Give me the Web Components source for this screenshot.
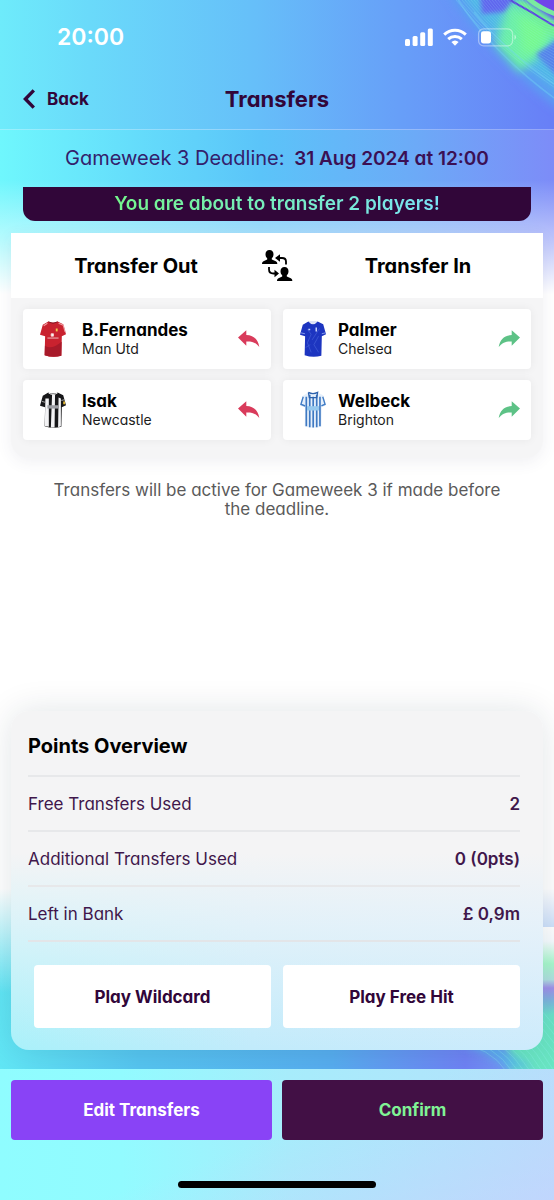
<!DOCTYPE html>
<html lang="en">
<head>
<meta charset="utf-8">
<meta name="viewport" content="width=device-width, initial-scale=1">
<title>Transfers</title>
<style>
  html { height: 100%; }
  body {
    margin: 0;
    min-height: 100%;
    display: flex;
    font-family: Inter, "Open Sans", sans-serif;
    font-feature-settings: "cv11";
    color: #000;
    background: #fff;
  }
  transfers-page { flex: 1; }
</style>
</head>
<body>
<transfers-page></transfers-page>

<script>
const define = (name, html, setup) => {
  const template = document.createElement('template');
  template.innerHTML = html;
  customElements.define(name, class extends HTMLElement {
    constructor() {
      super();
      this.attachShadow({ mode: 'open' }).append(template.content.cloneNode(true));
    }
    connectedCallback() { if (setup) setup(this, this.shadowRoot); }
  });
};

define('status-bar', `
<style>
  :host { display: flex; align-items: center; justify-content: space-between; height: 74px; padding: 0 38px 0 57px; color: #fff; }
  time { font-size: 23px; line-height: 28px; font-weight: 600; }
  svg { display: block; }
</style>
<time>20:00</time>
<svg width="112" height="20" viewBox="0 0 112 20" role="img" aria-label="Signal, Wi-Fi and battery">
  <g fill="#fff">
    <rect x="1" y="12" width="5" height="7" rx="1.5"/>
    <rect x="8.6" y="9" width="5" height="10" rx="1.5"/>
    <rect x="16.2" y="5.2" width="5" height="13.8" rx="1.5"/>
    <rect x="23.8" y="1.4" width="5" height="17.6" rx="1.5"/>
    <path d="M51 18.800l-3.600-3.700a5.400 5.400 0 0 1 7.200 0z"/>
  </g>
  <g fill="none" stroke="#fff" stroke-width="3">
    <path d="M44.200 12.200a10 10 0 0 1 13.600 0"/>
    <path d="M40.200 7.600a15.800 15.800 0 0 1 21.600 0"/>
  </g>
  <rect x="74.600" y="1.800" width="34" height="17" rx="5" fill="none" stroke="#fff" stroke-opacity=".4" stroke-width="1.300"/>
  <path d="M110.500 7.500v5.200a3 3 0 0 0 0-5.200z" fill="#fff" fill-opacity=".5"/>
  <rect x="77" y="4.200" width="10" height="12.200" rx="2.600" fill="#fff"/>
</svg>`);

define('nav-bar', `
<style>
  :host { display: grid; grid-template-columns: 1fr auto 1fr; align-items: center; height: 49px; padding: 0 23px 6px; color: #310639; border-bottom: 1px solid rgba(255,255,255,.3); }
  a { display: flex; align-items: center; gap: 12px; width: max-content; color: inherit; text-decoration: none; font-size: 17px; line-height: 24px; font-weight: 700; }
  h1 { margin: 0; font-size: 22px; line-height: 28px; font-weight: 700; }
</style>
<a href="#back">
  <svg width="12" height="20" viewBox="0 0 12 20" fill="none" stroke="#310639" stroke-width="3.400" aria-hidden="true"><path d="M10.800 1.400L2.400 10l8.400 8.600"/></svg>
  <span>Back</span>
</a>
<h1><slot></slot></h1>`);

define('deadline-notice', `
<style>
  :host { display: block; padding: 0 23px; text-align: center; }
  p { margin: 0; padding: 15px 0; font-size: 20px; line-height: 26px; color: #33206b; }
  strong { margin-left: 4px; font-size: 19px; font-weight: 600; color: #3b1054; }
  .banner { background: #310639; border-radius: 0 0 12px 12px; line-height: 34px; font-size: 19px; font-weight: 600; }
  .banner span { background: linear-gradient(90deg, #74f58c, #7ae3f5); -webkit-background-clip: text; background-clip: text; color: transparent; }
</style>
<p><slot name="label"></slot> <strong><slot name="date"></slot></strong></p>
<div class="banner" role="status"><span><slot></slot></span></div>`);

const body = 'M9 2.500Q14 5 19 2.500L25 5.500L28 16L23.500 18L23 38.500Q14 41 5 38L5.500 18L0 16.500L3 6Z';
const kits = {
  united: `<path d="${body}" fill="#c9222f"/><path d="M5.300 28Q12 33 23.300 24L23 38.500Q14 41 5 38Z" fill="#a81a2a"/><path d="M20 4.500l5 2 2 7M8 4.500L4 7" stroke="#ef9ca0" stroke-width="1.200" fill="none"/><path d="M9 3Q14 6 19 3" stroke="#821522" fill="none"/><path d="M8 20h12M12 15.500h2.500v2.500h-2.500z" stroke="#f5d4d3" stroke-width=".900" fill="#fff"/><path d="M18 10v3" stroke="#f0c84c" stroke-width="2"/>`,
  newcastle: `<path d="${body}" fill="#171719"/><path d="M5.800 9h3.700v29.500l-4.300-.700zM13 5h3.200l-.500 34.500h-4zM20 8l2.500 1v29l-3 1z" fill="#f3f3f5"/><path d="M2 12l4 1M23 11l4-1" stroke="#aaa"/><rect x="8" y="16" width="12" height="3.500" fill="#9c9da3"/><path d="M9 3Q14 6.500 19 3" stroke="#eee" fill="none"/><rect x="25" y="12" width="2" height="3" fill="#e1b632"/>`,
  chelsea: `<path d="${body}" fill="#1d35c0"/><path d="M9 2.500q5 6 10 0l-2-.500h-6z" fill="#dfe4f5"/><path d="M8 11l4 5-4 9 4 10M20 18l-5 9 5 8M6 30l5-3M21 10l-8 12" stroke="#4460d8" stroke-width=".700" fill="none"/><path d="M17.500 9v4M9 11h2" stroke="#c8d3fc" stroke-width="1.600"/><path d="M.800 14.500l4.500 1M23.500 15.500l4-1" stroke="#8da0ee"/>`,
  brighton: `<path d="${body}" fill="#e6f0fb"/><path d="M6.800 7v31M10.500 5v34M14.200 7v32.500M18 5v34M21.500 7v31" stroke="#3f79c2" stroke-width="1.800"/><path d="M9 2.500L10 8H18L19 2.500Q14 5 9 2.500" fill="none" stroke="#2c61ac" stroke-width="1.300"/><path d="M3.500 7L1 15l4.500 1.800M24.500 7l2.500 8-4 1.600" fill="none" stroke="#407cc5" stroke-width="1.500"/><rect x="7.500" y="17" width="13" height="4.500" fill="#96c9ee"/>`
};

define('player-card', `
<style>
  :host { display: flex; align-items: center; box-sizing: border-box; min-width: 0; height: 60px; padding: 0 10px 0 17px; background: #fff; border-radius: 4px; box-shadow: 0 0 10px rgba(0,0,0,.06); }
  svg { display: block; flex: none; }
  .text { flex: 1; min-width: 0; margin-left: 16px; }
  :host([direction="in"]) .text { margin-left: 12px; }
  .name { font-size: 17px; line-height: 20px; font-weight: 700; }
  .club { font-size: 14px; line-height: 18px; color: #1c1c1c; }
  .arrow { color: #d93b5b; }
  :host([direction="in"]) .arrow { color: #5dc286; transform: scaleX(-1); }
</style>
<svg class="kit" width="26" height="40" viewBox="0 0 28 42" preserveAspectRatio="none" aria-hidden="true"></svg>
<div class="text"><div class="name"><slot></slot></div><div class="club"><slot name="club"></slot></div></div>
<svg class="arrow" width="24" height="20" viewBox="0 0 24 20" fill="currentColor" aria-hidden="true"><path d="M1 8.600L9.300 1.200V6C17 6.300 21 10.500 22.300 18C18.500 13.200 15 12.200 9.300 12.400V16.800Z"/></svg>`,
(host, root) => { root.querySelector('.kit').innerHTML = kits[host.getAttribute('kit')]; });

define('transfer-panel', `
<style>
  :host { display: block; margin: 12px 11px 0; background: #f5f5f6; border-radius: 0 0 18px 18px; box-shadow: 0 4px 16px rgba(60,60,100,.08); }
  header { display: grid; grid-template-columns: 1fr 32px 1fr; align-items: center; height: 65px; background: #fff; text-align: center; }
  h2 { margin: 0; font-size: 20px; line-height: 26px; font-weight: 700; }
  .grid { display: grid; grid-template-columns: 1fr 1fr; gap: 11px 12px; padding: 11px 12px 18px; }
  svg { display: block; }
</style>
<header>
  <h2><slot name="out"></slot></h2>
  <svg width="32" height="34" viewBox="0 0 32 34" aria-hidden="true">
    <g id="person"><path d="M8.500 1c2.600 0 4 1.800 4 4.200 0 1.800-.700 3.200-1.700 4.100v1.200l4 1.700c1 .400 1.500 1.200 1.500 2.800H1c0-1.600.500-2.400 1.500-2.800l3.700-1.700V9.300C5.200 8.400 4.500 7 4.500 5.200 4.500 2.800 5.900 1 8.500 1z"/></g>
    <use href="#person" x="15" y="17"/>
    <path d="M25 15.500v-3q0-3.500-4-3.500h-3M8 18v2.500q0 4 4.500 4h2" fill="none" stroke="#000" stroke-width="1.800"/>
    <path d="M14 9l5-3.700v7.400zM18 24.500l-4.500-3.700v7.400z"/>
  </svg>
  <h2><slot name="in"></slot></h2>
</header>
<div class="grid"><slot></slot></div>`);

define('points-overview', `
<style>
  :host { display: block; margin: 0 11px 19px; padding: 17px 23px 22px 17px; border-radius: 18px;
    background: linear-gradient(180deg, #f4f4f5 0%, #f4f4f5 42%, rgba(241,244,248,.7) 62%, rgba(240,246,252,0) 100%), linear-gradient(90deg, #a9f1fa, #c1ebfb 45%, #cdebfc);
    box-shadow: 0 0 34px rgba(20,40,60,.12); }
  h2 { margin: 0; padding: 5px 0 16px; font-size: 20px; line-height: 26px; font-weight: 700; }
  table { width: 100%; border-collapse: collapse; font-size: 17px; line-height: 24px; color: #40174b; border-bottom: 2px solid #e3e5e8; }
  th { padding: 0; height: 53px; text-align: left; font-weight: 400; }
  td { padding: 0; text-align: right; font-weight: 600; }
  tr { border-top: 2px solid #e7e8ea; }
  .actions { display: grid; grid-template-columns: 1fr 1fr; gap: 12px; padding: 23px 0 0 6px; }
</style>
<h2>Points Overview</h2>
<table><tbody>
  <tr><th scope="row">Free Transfers Used</th><td>2</td></tr>
  <tr><th scope="row">Additional Transfers Used</th><td>0 (0pts)</td></tr>
  <tr><th scope="row">Left in Bank</th><td>£ 0,9m</td></tr>
</tbody></table>
<div class="actions"><slot></slot></div>`);

define('app-button', `
<style>
  :host { display: block; }
  button { display: block; width: 100%; height: 60px; padding: 0; border: 0; border-radius: 4px; background: #fff; color: #310639; font-family: inherit; font-feature-settings: inherit; font-size: 17px; line-height: 24px; font-weight: 700; cursor: pointer; }
  :host([kind="chip"]) button { height: 63px; }
  :host([kind="edit"]) button { background: #8943f6; color: #fff; }
  :host([kind="confirm"]) button { background: #421045; color: #80f395; }
</style>
<button type="button"><slot></slot></button>`);

define('action-bar', `
<style>
  :host { display: block; padding: 11px 11px 12px; background: linear-gradient(160deg, transparent 50%, rgba(204,204,255,.5)), linear-gradient(90deg, #8ffdff 0%, #92fbff 22%, #a7ecfb 52%, #b5e0fb 100%); }
  .row { display: grid; grid-template-columns: 1fr 1fr; gap: 10px; }
  .home { width: 198px; height: 7px; margin: 41px auto 0; border-radius: 4px; background: #000; }
</style>
<div class="row"><slot></slot></div>
<div class="home"></div>`);

const lines = (count, make) => Array.from({ length: count }, (_, i) => make(i)).join('');

define('page-art', `
<style>
  :host { position: absolute; inset: 0; overflow: hidden; pointer-events: none; }
  .top, .nav, .bottom { position: absolute; left: 0; right: 0; }
  .top { top: 0; height: 300px; background: linear-gradient(180deg, transparent 60%, rgba(255,255,255,.5) 80%, #fff 98%), linear-gradient(90deg, #6ff7fd, #5bc4f9 47%, #6caaf7 75%, #7d8cf8); }
  .nav { top: 0; height: 130px; background: linear-gradient(90deg, #6eebfb 0%, #6adafa 16%, #66c0f9 45%, #679ff8 72%, #687ff7 100%); }
  .bottom { bottom: 131px; height: 190px; background: linear-gradient(180deg, #fff 5%, rgba(255,255,255,.65) 25%, transparent 60%), linear-gradient(90deg, #61e6f5, #56c5f0 25%, #57adef 60%, #6f82f4 84%, #75adf3); }
  svg { position: absolute; right: 0; }
  .a { top: 0; }
  .b { bottom: 131px; }
</style>
<div class="top"></div>
<div class="nav"></div>
<svg class="a" width="130" height="125" viewBox="0 0 130 125" aria-hidden="true">
  <defs>
    <filter id="s1" x="-40%" y="-40%" width="180%" height="180%"><feGaussianBlur stdDeviation="5"/></filter>
    <filter id="s2" x="-40%" y="-40%" width="180%" height="180%"><feGaussianBlur stdDeviation="2"/></filter>
  </defs>
  <path d="M20 -14Q62 56 144 116V-14Z" fill="#5a9ff2" filter="url(#s1)"/>
  <path d="M34 -14Q68 46 144 96V-14Z" fill="#50b8e6" filter="url(#s1)"/>
  <path d="M84 0L140 26L126 46L96 72L72 44Z" fill="#6aefa6" filter="url(#s1)"/>
  <path d="M94 14L128 26L116 50L98 56Z" fill="#76f98e" filter="url(#s1)"/>
  <path d="M56 -4H92L80 12L58 14Z" fill="#6166ee" filter="url(#s2)"/>
  <path d="M90 2L134 40V24L100 0Z" fill="#6ef090" filter="url(#s2)"/>
  <path d="M112 54L136 38V80Z" fill="#5482ea" filter="url(#s2)"/>
  <path d="M96 -4L134 22V-4Z" fill="#7044ea" filter="url(#s2)"/>
  <path d="M102 0Q114 10 130 16V11Q118 6 110 0Z" fill="#79e9a0"/>
  <path d="M86 0Q108 12 130 26" fill="none" stroke="#5948dc" stroke-width="2"/>
  <g fill="none" stroke="#9ceffb" stroke-width=".600" opacity=".3">${lines(24, i => `<path d="M${32 + i * 3} 0Q${68 + i * 2} ${46 - i} 134 ${90 - i * 3}"/>`)}</g>
  <path d="M34 0Q68 52 130 98M50 12Q78 48 130 84" fill="none" stroke="#72d6f4" stroke-width="1.500" opacity=".4"/>
</svg>
<div class="bottom"></div>
<svg class="b" width="130" height="142" viewBox="0 0 130 142" aria-hidden="true">
  <defs>
    <filter id="s3" x="-40%" y="-40%" width="180%" height="180%"><feGaussianBlur stdDeviation="4"/></filter>
    <linearGradient id="edge" x1="0" y1="0" x2="0" y2="1"><stop offset="0" stop-color="#fff"/><stop offset=".100" stop-color="#f7fcff"/><stop offset=".260" stop-color="#a8f8cc"/><stop offset=".370" stop-color="#b0e0e0"/><stop offset=".430" stop-color="#a090ea"/><stop offset=".520" stop-color="#7db6de"/><stop offset=".620" stop-color="#6ce0cc"/><stop offset="1" stop-color="#6deec0"/></linearGradient>
  </defs>
  <rect x="112" y="0" width="18" height="142" fill="url(#edge)"/>
  <path d="M112 106L134 84V150H88L82 116Z" fill="#69e5c3" filter="url(#s3)"/>
  <path d="M36 118Q62 122 84 142H110Q80 122 58 112Z" fill="#55b6ee" opacity=".8" filter="url(#s3)"/>
  <g fill="none" stroke="#8cf2ec" stroke-width=".700" opacity=".45">${lines(14, i => `<path d="M${32 + i * 6} ${116 - i * 3}Q${66 + i * 5} ${120 - i * 2} ${82 + i * 6} 144"/>`)}</g>
</svg>`);

define('transfers-page', `
<style>
  :host { position: relative; display: flex; flex-direction: column; min-width: 0; }
  page-art { z-index: 0; }
  header, main, footer { position: relative; z-index: 1; }
  main { flex: 1; display: flex; flex-direction: column; }
  .note { margin: 23px auto 24px; padding: 0 48px; text-align: center; font-size: 17px; line-height: 19px; color: #5a5a5a; }
  points-overview { margin-top: auto; }
</style>
<page-art></page-art>
<header>
  <status-bar></status-bar>
  <nav-bar>Transfers</nav-bar>
</header>
<main>
  <deadline-notice>
    <span slot="label">Gameweek 3 Deadline:</span>
    <span slot="date">31 Aug 2024 at 12:00</span>
    You are about to transfer 2 players!
  </deadline-notice>
  <transfer-panel>
    <span slot="out">Transfer Out</span>
    <span slot="in">Transfer In</span>
    <player-card kit="united">B.Fernandes<span slot="club">Man Utd</span></player-card>
    <player-card kit="chelsea" direction="in">Palmer<span slot="club">Chelsea</span></player-card>
    <player-card kit="newcastle">Isak<span slot="club">Newcastle</span></player-card>
    <player-card kit="brighton" direction="in">Welbeck<span slot="club">Brighton</span></player-card>
  </transfer-panel>
  <p class="note">Transfers will be active for Gameweek 3 if made before the deadline.</p>
  <points-overview>
    <app-button kind="chip">Play Wildcard</app-button>
    <app-button kind="chip">Play Free Hit</app-button>
  </points-overview>
</main>
<footer>
  <action-bar>
    <app-button kind="edit">Edit Transfers</app-button>
    <app-button kind="confirm">Confirm</app-button>
  </action-bar>
</footer>`);
</script>
</body>
</html>
